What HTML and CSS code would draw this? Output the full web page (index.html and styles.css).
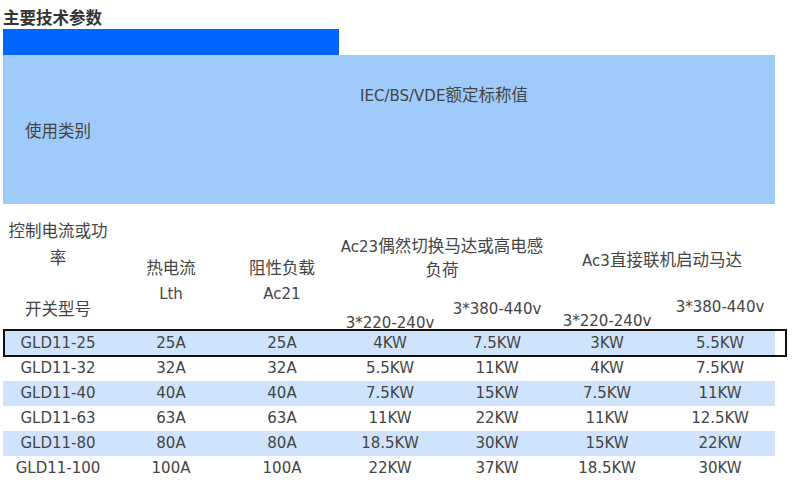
FILE: index.html
```html
<!DOCTYPE html>
<html lang="zh-CN">
<head>
<meta charset="utf-8">
<title>主要技术参数</title>
<link rel="stylesheet" href="styles.css">
</head>
<body>
<div class="page">
  <h1 class="title">主要技术参数</h1>
  <div class="tab-bar"></div>
  <div class="band">
    <div class="band-cat"><span class="zh">使用类别</span></div>
    <div class="band-std">IEC/BS/VDE<span class="zh">额定标称值</span></div>
  </div>
  <div class="head">
    <div class="h-model">
      <div class="h-ctrl"><span class="zh">控制电流或功率</span></div>
      <div class="h-type"><span class="zh">开关型号</span></div>
    </div>
    <div class="h-simple"><span class="zh">热电流</span><br>Lth</div>
    <div class="h-simple"><span class="zh">阻性负载</span><br>Ac21</div>
    <div class="h-group h-ac23">
      <div class="g-title">Ac23<span class="zh">偶然切换马达或高电感负荷</span></div>
      <div class="v v-low">3*220-240v</div>
      <div class="v v-high">3*380-440v</div>
    </div>
    <div class="h-group h-ac3">
      <div class="g-title">Ac3<span class="zh">直接联机启动马达</span></div>
      <div class="v v-low">3*220-240v</div>
      <div class="v v-high">3*380-440v</div>
    </div>
  </div>
  <div class="rows">
    <div class="row alt sel"><div>GLD11-25</div><div>25A</div><div>25A</div><div>4KW</div><div>7.5KW</div><div>3KW</div><div>5.5KW</div></div>
    <div class="row"><div>GLD11-32</div><div>32A</div><div>32A</div><div>5.5KW</div><div>11KW</div><div>4KW</div><div>7.5KW</div></div>
    <div class="row alt"><div>GLD11-40</div><div>40A</div><div>40A</div><div>7.5KW</div><div>15KW</div><div>7.5KW</div><div>11KW</div></div>
    <div class="row"><div>GLD11-63</div><div>63A</div><div>63A</div><div>11KW</div><div>22KW</div><div>11KW</div><div>12.5KW</div></div>
    <div class="row alt"><div>GLD11-80</div><div>80A</div><div>80A</div><div>18.5KW</div><div>30KW</div><div>15KW</div><div>22KW</div></div>
    <div class="row"><div>GLD11-100</div><div>100A</div><div>100A</div><div>22KW</div><div>37KW</div><div>18.5KW</div><div>30KW</div></div>
  </div>
</div>
</body>
</html>
```

FILE: styles.css
```css
body {
  margin: 0;
  background: #fff;
  color: #444;
  font-family: "DejaVu Sans", "Noto Sans CJK SC", sans-serif;
  font-size: 15px;
}

.page {
  width: 772px;
  padding-left: 3px;
}

.zh {
  font-family: "Noto Sans CJK SC", sans-serif;
  font-size: 16.5px;
}

.title {
  margin: 0;
  padding-top: 5px;
  height: 24px;
  line-height: 24px;
  font-family: "Noto Sans CJK SC", sans-serif;
  font-size: 16.5px;
  font-weight: 700;
  color: #333;
}

.tab-bar {
  width: 336px;
  height: 26px;
  background: #0066ff;
}

.band {
  display: grid;
  grid-template-columns: 110px 1fr;
  height: 149px;
  background: #9fcbfa;
}

.band-cat {
  align-self: center;
  text-align: center;
  line-height: 24px;
  padding-top: 3px;
}

.band-std {
  text-align: center;
  padding-top: 27px;
  line-height: 24px;
}

.head {
  display: grid;
  grid-template-columns: 110px 116px 106px 214px 226px;
  height: 127px;
}

.h-model {
  text-align: center;
  padding-top: 14px;
  line-height: 25px;
}

.h-type {
  margin-top: 24px;
}

.h-simple {
  text-align: center;
  padding-top: 51px;
  line-height: 25px;
}

.h-group {
  display: grid;
  align-content: start;
  align-items: start;
  text-align: center;
}

.h-ac23 {
  grid-template-columns: 110px 104px;
}

.h-ac3 {
  grid-template-columns: 116px 110px;
}

.g-title {
  grid-column: 1 / -1;
  line-height: 22px;
}

.v {
  line-height: 20px;
}

.h-ac23 .g-title { padding-top: 30px; }
.h-ac23 .v-low { padding-top: 31px; }
.h-ac23 .v-high { padding-top: 17px; }

.h-ac3 .g-title { padding-top: 44px; }
.h-ac3 .v-low { padding-top: 39px; }
.h-ac3 .v-high { padding-top: 25px; }

.row {
  display: grid;
  grid-template-columns: 110px 116px 106px 110px 104px 116px 110px;
  height: 25px;
  line-height: 25px;
  text-align: center;
}

.row.alt {
  background: #cfe4fc;
}

.row.sel {
  position: relative;
}

.row.sel::after {
  content: "";
  position: absolute;
  left: 0;
  top: -2px;
  right: -12px;
  bottom: -1px;
  border: 2px solid #111;
}
```
